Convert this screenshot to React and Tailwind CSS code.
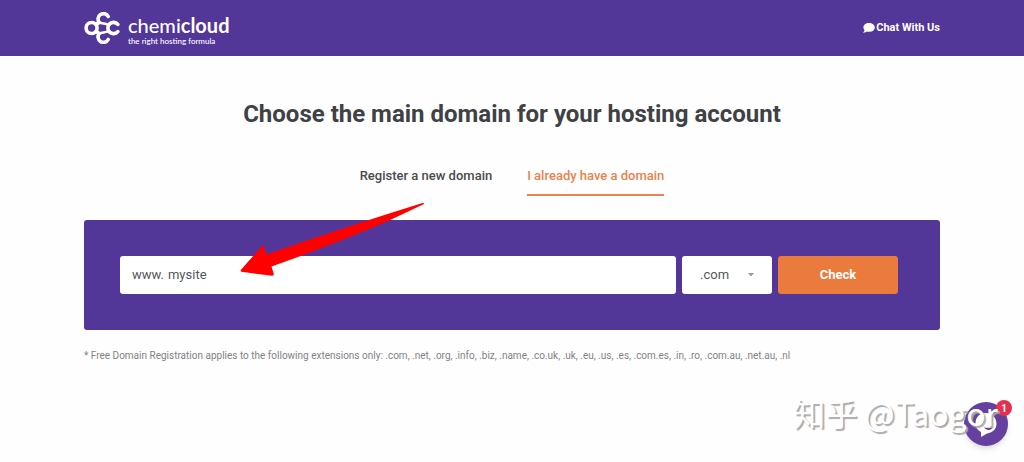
import React from "react";

function Logo() {
  return (
    <a href="#home" aria-label="chemicloud" className="flex items-center gap-2 text-white">
      <svg width="36" height="32" viewBox="0 0 36 32" fill="none" stroke="#fff" strokeWidth="3.6" strokeLinecap="round" strokeLinejoin="round">
        <circle cx="7.600" cy="16" r="5.500" />
        <path d="M24.200 4.500A5.400 5.400 0 1 0 15.200 10.400L12 12.600M12 19.400L15.200 21.600A5.400 5.400 0 1 0 24.200 27.500" />
        <path d="M33.800 12.400A5.600 5.600 0 1 0 33.800 19.600" />
        <path d="M15.200 10.400C18 12 21 11 24.500 12.800M15.200 21.600C18 20 21 21 24.500 19.200" strokeWidth="2.600" />
      </svg>
      <span className="flex flex-col pt-0.5">
        <span className="font-[Lato] text-[20px] leading-6 font-medium">chemi<b>cloud</b></span>
        <span className="font-[Lato] text-[8px] leading-2 font-medium">the right hosting formula</span>
      </span>
    </a>
  );
}

function Header() {
  return (
    <header className="bg-[#523799]">
      <div className="mx-auto flex h-14 max-w-[856px] items-center justify-between">
        <Logo />
        <a href="#chat" className="flex items-center gap-px text-[11px] font-bold text-white">
          <svg width="12" height="10" viewBox="0 0 12 10" fill="#fff">
            <path d="M6 0C2.8 0 .4 1.9.4 4.4c0 1.1.5 2 1.2 2.8C1.4 8.200.8 9 0 9.700c1.500.1 2.700-.4 3.600-1.200.8.200 1.600.3 2.400.3 3.200 0 5.800-1.900 5.800-4.400S9.200 0 6 0z" />
          </svg>
          Chat With Us
        </a>
      </div>
    </header>
  );
}

function DomainForm() {
  return (
    <form className="relative mt-6 rounded-[3px] bg-[#523799] py-9 pr-[42px] pl-9" onSubmit={(e) => e.preventDefault()}>
      <div className="flex gap-1.5 text-[13px] text-[#55565a]">
        <label className="flex h-[38px] min-w-0 flex-1 items-center gap-1 rounded-[3px] bg-white px-3">
          <span>www.</span>
          <input aria-label="Domain name" defaultValue="mysite" className="min-w-0 flex-1 bg-transparent outline-none" />
        </label>
        <div className="relative w-[90px]">
          <select aria-label="Extension" className="h-full w-full appearance-none rounded-[3px] bg-white pl-[18px] outline-none">
            <option>.com</option>
            <option>.net</option>
            <option>.org</option>
          </select>
          <svg className="pointer-events-none absolute top-[17px] right-[18px]" width="6" height="4" viewBox="0 0 6 4" fill="#999">
            <path d="M0 0h6L3 3.500z" />
          </svg>
        </div>
        <button className="w-[120px] rounded-[3px] bg-[#eb7b3c] font-bold text-white">Check</button>
      </div>
      <svg className="pointer-events-none absolute top-[-18px] left-[156px]" width="186" height="76" viewBox="0 0 186 76" fill="#fe0000">
        <path d="M182.500 1Q184.500 .8 184 2L147 19.500Q90 44 31.500 64.500L33.800 72Q34 74 32 73.800L1.500 69.800Q0 69 1 67.800L21.500 44.500Q23.500 43 24 45L26.500 52.500Q105 25 182.500 1Z" />
      </svg>
    </form>
  );
}

function ChatWidget() {
  return (
    <button aria-label="Open chat, 1 unread" className="absolute right-4 bottom-4 size-11 rounded-full bg-[#66409f] shadow-md">
      <svg width="44" height="44" viewBox="0 0 44 44" fill="none">
        <path d="M22 11c-6 0-10.500 4-10.500 10.500 0 4 2.500 7 5.500 8.500v5l6-3.500c6-1 9.500-4.500 9.500-10S28 11 22 11z" fill="#fff" />
        <path d="M20 25.500c2.500 3.500 7.500 3 9-.5-3 1-6 1-9 .5z" fill="#66409f" />
      </svg>
      <span className="absolute -top-0.5 -right-1 flex size-4 items-center justify-center rounded-full bg-[#e5304f] text-[10px] font-bold text-white">1</span>
    </button>
  );
}

export default function App() {
  return (
    <div className="relative min-h-screen bg-[#fefefe] font-[Roboto,sans-serif]">
      <Header />
      <main className="mx-auto max-w-[856px] pt-10">
        <h1 className="text-center text-2xl leading-9 font-bold text-[#3e4145]">Choose the main domain for your hosting account</h1>
        <nav className="mt-7 flex justify-center gap-[35px] text-[13px] leading-8 font-medium">
          <a href="#register" className="pb-0.5 text-[#4a4b4f]">Register a new domain</a>
          <a href="#existing" aria-current="page" className="border-b-2 border-[#e9824c] pb-0.5 text-[#e9824c]">I already have a domain</a>
        </nav>
        <DomainForm />
        <p className="mt-4 text-[10px] leading-5 text-[#818286]">* Free Domain Registration applies to the following extensions only: .com, .net, .org, .info, .biz, .name, .co.uk, .uk, .eu, .us, .es, .com.es, .in, .ro, .com.au, .net.au, .nl</p>
      </main>
      <ChatWidget />
      <div className="pointer-events-none absolute right-[26px] bottom-8 font-['Noto_Sans_CJK_SC',sans-serif] text-[32px] leading-9 text-white [text-shadow:2px_2px_1px_#aaa]">知乎 @Taogor</div>
    </div>
  );
}
